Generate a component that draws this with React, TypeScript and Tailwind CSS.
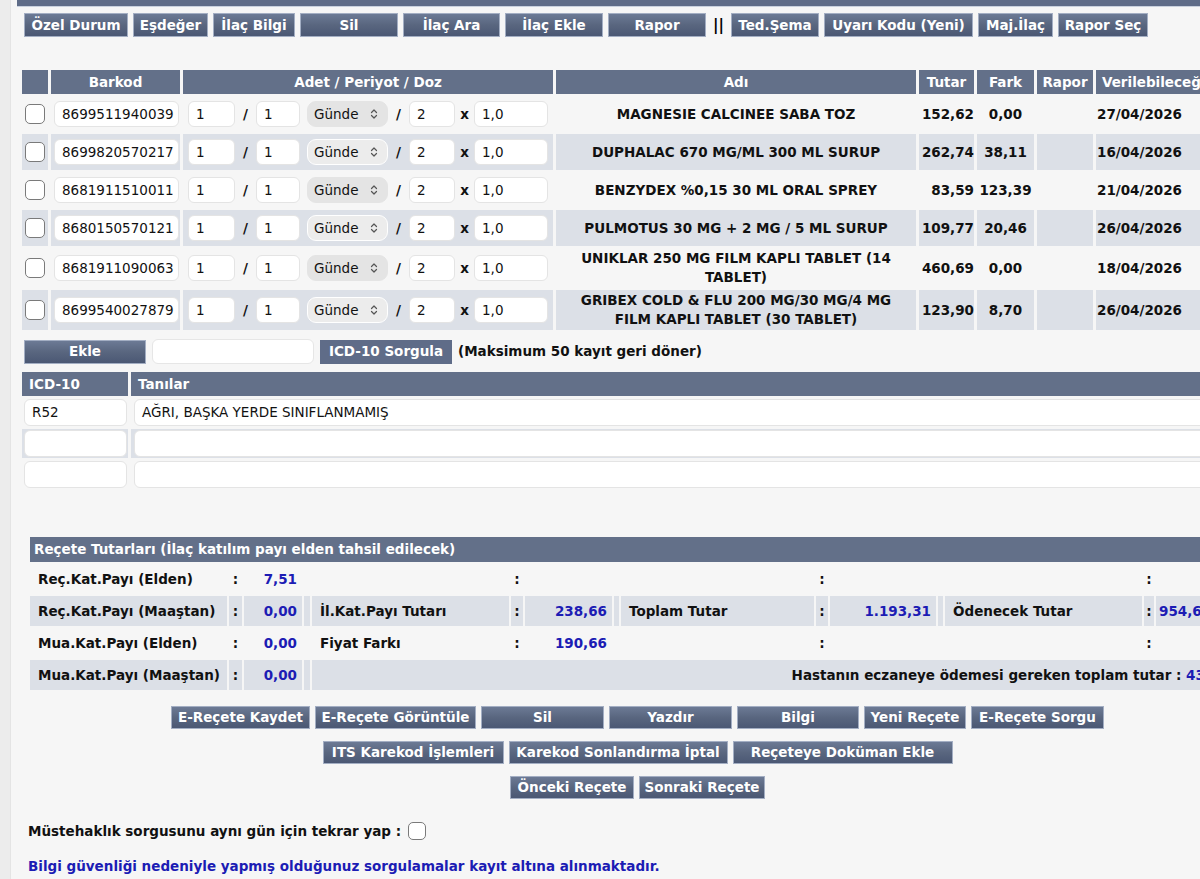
import { Fragment } from "react";
import { ChevronsUpDown } from "lucide-react";

type Drug = {
  barkod: string;
  ad: string;
  tutar: string;
  fark: string;
  tarih: string;
  tall?: boolean;
};

const drugs: Drug[] = [
  { barkod: "8699511940039", ad: "MAGNESIE CALCINEE SABA TOZ", tutar: "152,62", fark: "0,00", tarih: "27/04/2026" },
  { barkod: "8699820570217", ad: "DUPHALAC 670 MG/ML 300 ML SURUP", tutar: "262,74", fark: "38,11", tarih: "16/04/2026" },
  { barkod: "8681911510011", ad: "BENZYDEX %0,15 30 ML ORAL SPREY", tutar: "83,59", fark: "123,39", tarih: "21/04/2026" },
  { barkod: "8680150570121", ad: "PULMOTUS 30 MG + 2 MG / 5 ML SURUP", tutar: "109,77", fark: "20,46", tarih: "26/04/2026" },
  { barkod: "8681911090063", ad: "UNIKLAR 250 MG FILM KAPLI TABLET (14 TABLET)", tutar: "460,69", fark: "0,00", tarih: "18/04/2026", tall: true },
  { barkod: "8699540027879", ad: "GRIBEX COLD & FLU 200 MG/30 MG/4 MG FILM KAPLI TABLET (30 TABLET)", tutar: "123,90", fark: "8,70", tarih: "26/04/2026", tall: true },
];

const toolbar = [
  { label: "Özel Durum", w: "w-[104px]" },
  { label: "Eşdeğer", w: "w-[75px]" },
  { label: "İlaç Bilgi", w: "w-[82px]" },
  { label: "Sil", w: "w-[98px]" },
  { label: "İlaç Ara", w: "w-[97px]" },
  { label: "İlaç Ekle", w: "w-[98px]" },
  { label: "Rapor", w: "w-[98px]" },
];

const toolbar2 = [
  { label: "Ted.Şema", w: "w-[88px]" },
  { label: "Uyarı Kodu (Yeni)", w: "w-[149px]" },
  { label: "Maj.İlaç", w: "w-[75px]" },
  { label: "Rapor Seç", w: "w-[90px]" },
];

const actionRows = [
  [
    { label: "E-Reçete Kaydet", w: "w-[139px]" },
    { label: "E-Reçete Görüntüle", w: "w-[161px]" },
    { label: "Sil", w: "w-[123px]" },
    { label: "Yazdır", w: "w-[123px]" },
    { label: "Bilgi", w: "w-[122px]" },
    { label: "Yeni Reçete", w: "w-[102px]" },
    { label: "E-Reçete Sorgu", w: "w-[133px]" },
  ],
  [
    { label: "ITS Karekod İşlemleri", w: "w-[181px]" },
    { label: "Karekod Sonlandırma İptal", w: "w-[219px]" },
    { label: "Reçeteye Doküman Ekle", w: "w-[220px]" },
  ],
  [
    { label: "Önceki Reçete", w: "w-[124px]" },
    { label: "Sonraki Reçete", w: "w-[126px]" },
  ],
];

// tutarlar tablosu: [etiket, deger] x 4 blok
const totals = [
  [
    ["Reç.Kat.Payı (Elden)", "7,51"],
    ["", ""],
    ["", ""],
    ["", ""],
  ],
  [
    ["Reç.Kat.Payı (Maaştan)", "0,00"],
    ["İl.Kat.Payı Tutarı", "238,66"],
    ["Toplam Tutar", "1.193,31"],
    ["Ödenecek Tutar", "954,65"],
  ],
  [
    ["Mua.Kat.Payı (Elden)", "0,00"],
    ["Fiyat Farkı", "190,66"],
    ["", ""],
    ["", ""],
  ],
];

function Btn({ label, w, h = "h-[24px]" }: { label: string; w: string; h?: string }) {
  return (
    <div
      className={`${w} ${h} shrink-0 flex items-center justify-center border border-[#a3aec3] bg-linear-to-b from-[#6c7a95] via-[#59667f] to-[#4b5874] text-white font-bold whitespace-nowrap`}
    >
      {label}
    </div>
  );
}

function Field({ value, className = "" }: { value: string; className?: string }) {
  return (
    <div
      className={`h-[26px] rounded-[6px] bg-white border border-[#e4e4e4] px-[7px] flex items-center whitespace-nowrap overflow-hidden ${className}`}
    >
      {value}
    </div>
  );
}

function Check({ size = "w-[20px] h-[20px]" }: { size?: string }) {
  return <div className={`${size} rounded-[5px] border-[1.5px] border-[#7a7a7a] bg-white`} />;
}

export default function App() {
  const gray = "bg-[#dce0e7]";
  const light = "";

  return (
    <div className="w-[1200px] h-[879px] overflow-hidden flex bg-[#f6f6f6] text-[13.5px] text-[#111] font-['DejaVu_Sans',sans-serif]">
      <div className="w-[11px] shrink-0 bg-[#ececec] border-r border-[#e4e4e4]" />

      <div className="w-[1250px] shrink-0 flex flex-col">
        {/* header remains */}
        <div className="ml-[6px] h-[7px] bg-[#5f6c88] border-b border-[#c9d1de]" />

        {/* toolbar */}
        <div className="mt-[6px] ml-[13px] flex gap-[5px] items-center">
          {toolbar.map((b) => (
            <Btn key={b.label} label={b.label} w={b.w} />
          ))}
          <div className="w-[15px] text-center font-bold text-[15px] text-black">||</div>
          {toolbar2.map((b) => (
            <Btn key={b.label} label={b.label} w={b.w} />
          ))}
        </div>

        {/* ilac tablosu */}
        <table className="mt-[31px] ml-[8px] w-[1270px] table-fixed border-separate border-spacing-x-[3px] border-spacing-y-[2px]">
          <colgroup>
            <col className="w-[26px]" />
            <col className="w-[129px]" />
            <col className="w-[370px]" />
            <col className="w-[360px]" />
            <col className="w-[55px]" />
            <col className="w-[57px]" />
            <col className="w-[56px]" />
            <col className="w-[190px]" />
          </colgroup>
          <thead>
            <tr className="h-[24px] text-white font-bold">
              <th className="bg-[#637089] p-0"></th>
              <th className="bg-[#637089] p-0">Barkod</th>
              <th className="bg-[#637089] p-0">Adet / Periyot / Doz</th>
              <th className="bg-[#637089] p-0">Adı</th>
              <th className="bg-[#637089] p-0">Tutar</th>
              <th className="bg-[#637089] p-0">Fark</th>
              <th className="bg-[#637089] p-0">Rapor</th>
              <th className="bg-[#637089] p-0 pl-[6px] text-left whitespace-nowrap">Verilebileceği Tarih</th>
            </tr>
          </thead>
          <tbody>
            {drugs.map((d, i) => {
              const bg = i % 2 === 1 ? gray : light;
              return (
                <tr key={d.barkod} className={d.tall ? "h-[40px]" : "h-[36px]"}>
                  <td className={`${bg} p-0`}>
                    <div className="flex justify-center">
                      <Check />
                    </div>
                  </td>
                  <td className={`${bg} p-0`}>
                    <Field value={d.barkod} className="ml-[3px] w-[125px] px-[6px]" />
                  </td>
                  <td className={`${bg} p-0`}>
                    <div className="flex items-center pl-[5px]">
                      <Field value="1" className="w-[47px]" />
                      <span className="w-[21px] text-center font-bold">/</span>
                      <Field value="1" className="w-[44px]" />
                      <div
                        className={`ml-[7px] w-[81px] h-[26px] rounded-[9px] border flex items-center justify-between pl-[6px] pr-[7px] ${
                          i % 2 === 1 ? "bg-[#ececec] border-white" : "bg-[#e4e4e4] border-[#e4e4e4]"
                        }`}
                      >
                        <span>Günde</span>
                        <ChevronsUpDown size={12} strokeWidth={2.4} className="text-[#555]" />
                      </div>
                      <span className="w-[21px] text-center font-bold">/</span>
                      <Field value="2" className="w-[46px]" />
                      <span className="w-[19px] text-center font-bold">x</span>
                      <Field value="1,0" className="w-[74px]" />
                    </div>
                  </td>
                  <td className={`${bg} p-0 px-[14px] text-center font-bold leading-[19px]`}>{d.ad}</td>
                  <td className={`${bg} p-0 text-right font-bold whitespace-nowrap`}>{d.tutar}</td>
                  <td className={`${bg} p-0 text-center font-bold`}>{d.fark}</td>
                  <td className={`${bg} p-0`}></td>
                  <td className={`${bg} p-0 pl-[1px] font-bold`}>{d.tarih}</td>
                </tr>
              );
            })}
          </tbody>
        </table>

        {/* tani ekle */}
        <div className="mt-[7px] ml-[13px] flex items-center">
          <Btn label="Ekle" w="w-[122px]" />
          <div className="ml-[6px] w-[162px] h-[25px] rounded-[6px] bg-white border border-[#e6e6e6]" />
          <div className="ml-[6px] w-[132px] h-[24px] bg-[#5f6c88] text-white font-bold flex items-center justify-center">
            ICD-10 Sorgula
          </div>
          <span className="ml-[6px] font-bold">(Maksimum 50 kayıt geri döner)</span>
        </div>

        {/* tanilar */}
        <table className="mt-[6px] ml-[8px] w-[1240px] table-fixed border-separate border-spacing-x-[3px] border-spacing-y-[2px]">
          <colgroup>
            <col className="w-[106px]" />
            <col />
          </colgroup>
          <thead>
            <tr className="h-[24px] text-white font-bold text-left">
              <th className="bg-[#637089] p-0 pl-[7px]">ICD-10</th>
              <th className="bg-[#637089] p-0 pl-[7px]">Tanılar</th>
            </tr>
          </thead>
          <tbody>
            {[
              ["R52", "AĞRI, BAŞKA YERDE SINIFLANMAMIŞ"],
              ["", ""],
              ["", ""],
            ].map(([kod, tani], i) => {
              const bg = i % 2 === 1 ? gray : light;
              return (
                <tr key={i} className="h-[29px]">
                  <td className={`${bg} p-0`}>
                    <Field value={kod} className="ml-[2px] w-[103px] h-[27px] px-[6px]" />
                  </td>
                  <td className={`${bg} p-0`}>
                    <Field value={tani} className="ml-[3px] h-[27px]" />
                  </td>
                </tr>
              );
            })}
          </tbody>
        </table>

        {/* recete tutarlari */}
        <table className="mt-[44px] ml-[17px] w-[1222px] table-fixed border-separate border-spacing-[2px] font-bold">
          <colgroup>
            <col className="w-[197px]" />
            <col className="w-[13px]" />
            <col className="w-[58px]" />
            <col className="w-[6px]" />
            <col className="w-[197px]" />
            <col className="w-[12px]" />
            <col className="w-[87px]" />
            <col className="w-[5px]" />
            <col className="w-[193px]" />
            <col className="w-[12px]" />
            <col className="w-[106px]" />
            <col className="w-[5px]" />
            <col className="w-[197px]" />
            <col className="w-[10px]" />
            <col className="w-[92px]" />
          </colgroup>
          <thead>
            <tr className="h-[25px]">
              <th colSpan={15} className="bg-[#637089] p-0 pl-[4px] text-left text-white whitespace-nowrap">
                Reçete Tutarları (İlaç katılım payı elden tahsil edilecek)
              </th>
            </tr>
          </thead>
          <tbody>
            {totals.map((row, i) => {
              const bg = i % 2 === 1 ? gray : light;
              return (
                <tr key={i} className="h-[30px]">
                  {row.map(([label, val], j) => (
                    <Fragment key={j}>
                      <td className={`${bg} p-0 pl-[8px] whitespace-nowrap`}>{label}</td>
                      <td className={`${bg} p-0 text-center`}>:</td>
                      <td
                        className={`${bg} p-0 text-[#1c1cb4] whitespace-nowrap ${
                          j === 3 ? "pl-[3px] text-left" : "pr-[5px] text-right"
                        }`}
                      >
                        {val}
                      </td>
                      {j < 3 && <td className={`${bg} p-0`}></td>}
                    </Fragment>
                  ))}
                </tr>
              );
            })}
            <tr className="h-[30px]">
              <td className={`${gray} p-0 pl-[8px] whitespace-nowrap`}>Mua.Kat.Payı (Maaştan)</td>
              <td className={`${gray} p-0 text-center`}>:</td>
              <td className={`${gray} p-0 pr-[5px] text-right text-[#1c1cb4]`}>0,00</td>
              <td className={`${gray} p-0`}></td>
              <td colSpan={11} className={`${gray} p-0 pr-[10px] text-right whitespace-nowrap`}>
                Hastanın eczaneye ödemesi gereken toplam tutar : <span className="text-[#1c1cb4]">436,83</span>
              </td>
            </tr>
          </tbody>
        </table>

        {/* islem butonlari */}
        <div className="mt-[14px] ml-[19px] w-[1215px] flex flex-col items-center gap-[12px]">
          {actionRows.map((row, i) => (
            <div key={i} className="flex gap-[5px]">
              {row.map((b) => (
                <Btn key={b.label} label={b.label} w={b.w} h="h-[23px]" />
              ))}
            </div>
          ))}
        </div>

        <div className="mt-[23px] ml-[17px] flex items-center font-bold leading-[18px]">
          <span>Müstehaklık sorgusunu aynı gün için tekrar yap :</span>
          <div className="ml-[7px]">
            <Check size="w-[18px] h-[18px]" />
          </div>
        </div>

        <div className="mt-[17px] ml-[17px] font-bold leading-[18px] text-[#1c1cb4]">
          Bilgi güvenliği nedeniyle yapmış olduğunuz sorgulamalar kayıt altına alınmaktadır.
        </div>
      </div>
    </div>
  );
}
